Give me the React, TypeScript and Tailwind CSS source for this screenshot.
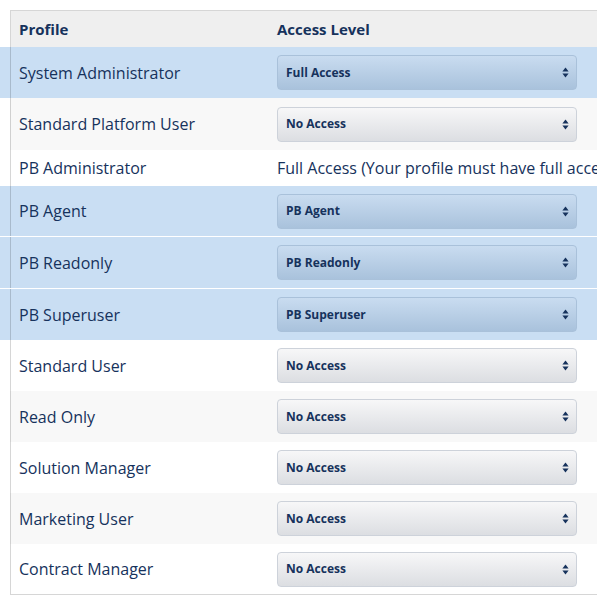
import React from "react";

type Row = { name: string; value?: string; text?: string; blue?: boolean; sep?: boolean; h: string };

const rows: Row[] = [
  { name: "System Administrator", value: "Full Access", blue: true, h: "h-[51px]" },
  { name: "Standard Platform User", value: "No Access", h: "h-[52px]" },
  { name: "PB Administrator", text: "Full Access (Your profile must have full access to this app)", h: "h-[36px]" },
  { name: "PB Agent", value: "PB Agent", blue: true, sep: true, h: "h-[50px]" },
  { name: "PB Readonly", value: "PB Readonly", blue: true, sep: true, h: "h-[51px]" },
  { name: "PB Superuser", value: "PB Superuser", blue: true, h: "h-[51px]" },
  { name: "Standard User", value: "No Access", h: "h-[51px]" },
  { name: "Read Only", value: "No Access", h: "h-[51px]" },
  { name: "Solution Manager", value: "No Access", h: "h-[51px]" },
  { name: "Marketing User", value: "No Access", h: "h-[51px]" },
  { name: "Contract Manager", value: "No Access", h: "h-[51px]" },
];

function Arrows() {
  return (
    <svg width="7" height="11" viewBox="0 0 7 11" className="shrink-0">
      <path d="M3.5 0.5 L6.6 4.4 L0.4 4.4 Z" fill="#16325c" />
      <path d="M3.5 10.5 L6.6 6.6 L0.4 6.6 Z" fill="#16325c" />
    </svg>
  );
}

function Select({ value, blue }: { value: string; blue?: boolean }) {
  return (
    <div
      className={
        "flex h-[35px] w-[300px] items-center justify-between rounded-[4px] border pl-[8px] pr-[7px] text-[12px] font-bold text-[#16325c] " +
        (blue
          ? "border-[#a9c1da] bg-gradient-to-b from-[#c9dcf0] to-[#a9c2dc]"
          : "border-[#cdd2da] bg-gradient-to-b from-[#f7f7f8] to-[#dcdee2]")
      }
    >
      <span>{value}</span>
      <Arrows />
    </div>
  );
}

export default function App() {
  return (
    <div
      className="w-[597px] h-[606px] overflow-hidden bg-white pt-[10px] text-[#16325c]"
      style={{ fontFamily: "'Open Sans', Lato, sans-serif" }}
    >
      <div className="flex">
        <div className="w-[10px] shrink-0" />
        <div className="flex h-[37px] w-[700px] shrink-0 items-center border-l border-t border-[#d6d6d6] bg-[#efefef] text-[15px] font-bold">
          <div className="w-[266px] shrink-0 pl-[8px]">Profile</div>
          <div>Access Level</div>
        </div>
      </div>
      {rows.map((r, i) => {
        const stripe = i % 2 === 1 ? "bg-[#f8f8f8]" : "bg-white";
        const last = i === rows.length - 1;
        return (
          <div
            key={r.name}
            className={
              "flex " +
              (r.blue ? "bg-[#c9def3] " : "") +
              (r.sep ? "border-b border-white" : "")
            }
          >
            <div className="w-[10px] shrink-0" />
            <div
              className={
                "flex w-[700px] shrink-0 items-center border-l border-[rgba(0,0,0,0.16)] text-[16px] " +
                (r.blue ? "" : stripe + " ") +
                r.h +
                " " +
                (last ? "border-b" : "")
              }
            >
              <div className="w-[266px] shrink-0 pl-[8px] whitespace-nowrap">{r.name}</div>
              {r.value ? (
                <Select value={r.value} blue={r.blue} />
              ) : (
                <div className="whitespace-nowrap">{r.text}</div>
              )}
            </div>
          </div>
        );
      })}
    </div>
  );
}
